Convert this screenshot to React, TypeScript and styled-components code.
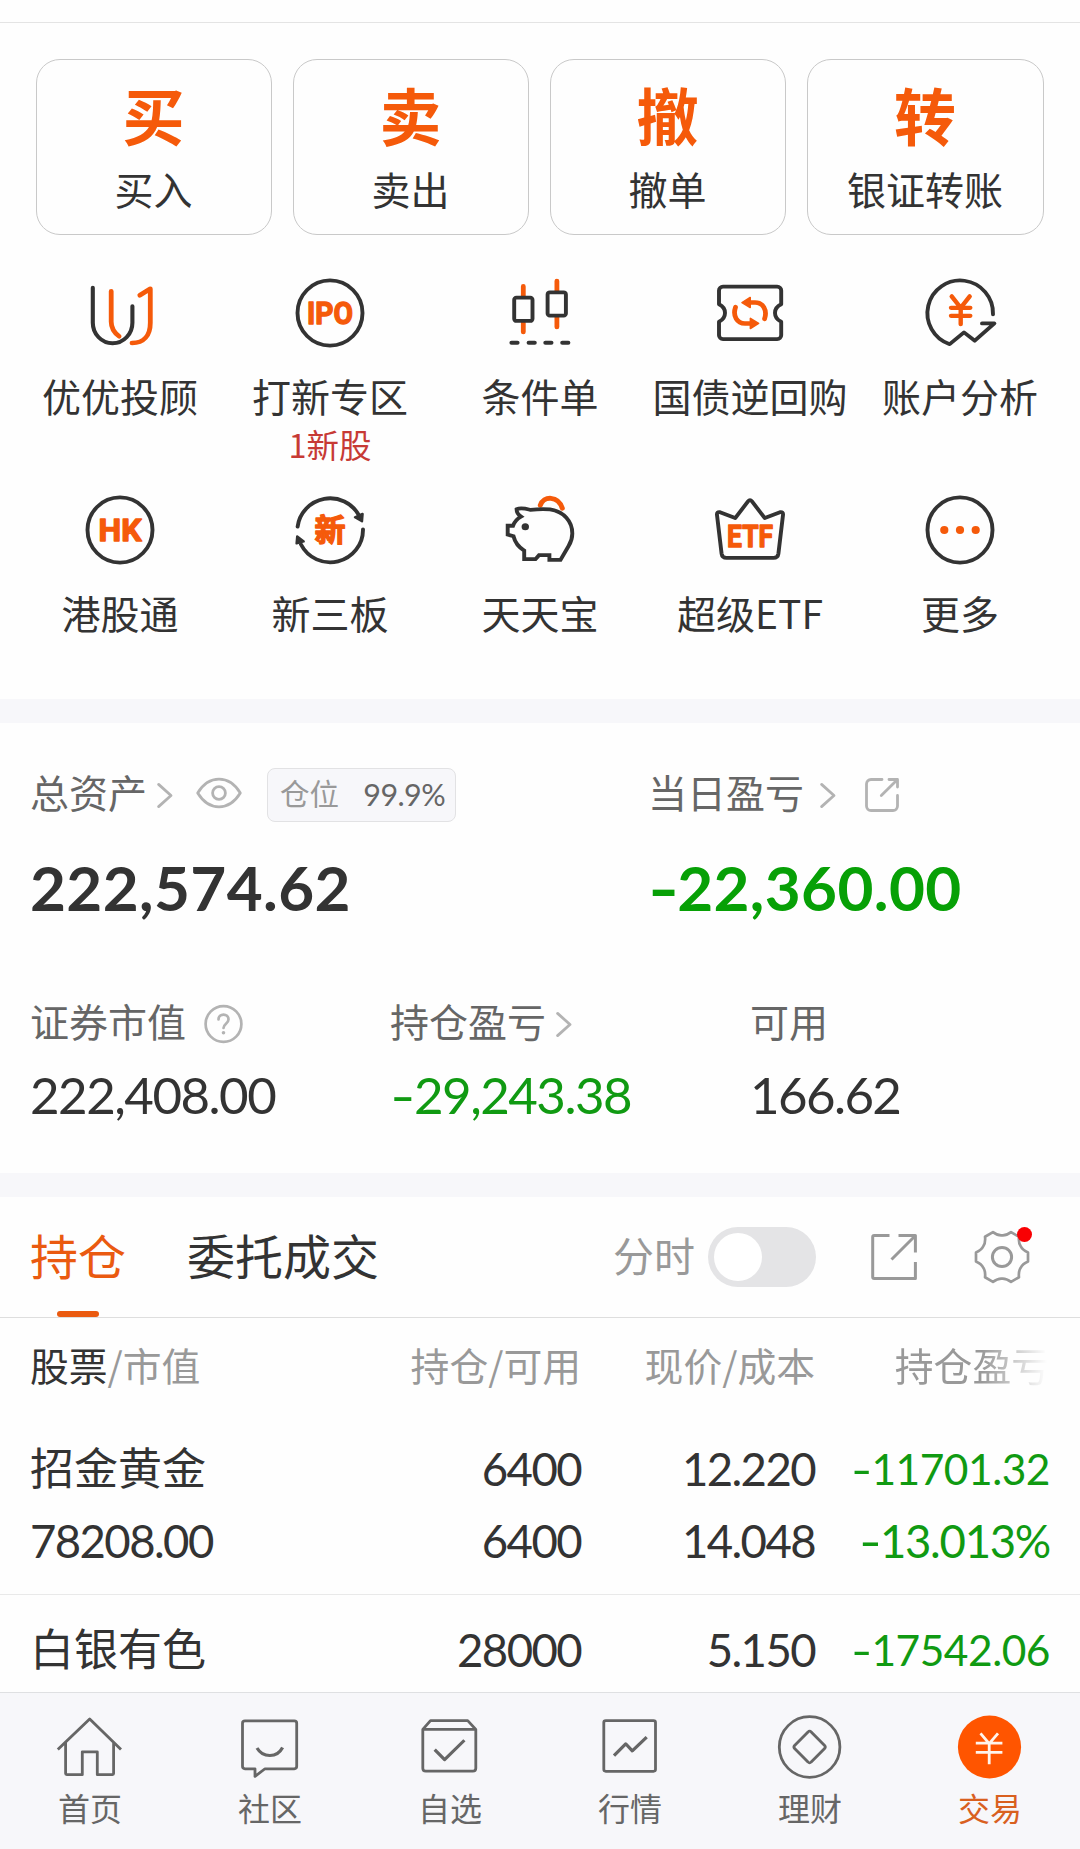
import React from "react";
import styled, { createGlobalStyle } from "styled-components";

const INK = "#333333";
const MUTED = "#666666";
const FAINT = "#999999";
const PALE = "#b3b3b3";
const ORANGE = "#f55a0a";
const GREEN = "#109a12";
const PANEL = "#f7f7fa";

const CJK = `"Noto Sans CJK SC", "Noto Sans", sans-serif`;
const DIGITS = `Lato, "Noto Sans CJK SC", sans-serif`;

const GlobalStyle = createGlobalStyle`
  * { box-sizing: border-box; }
  body { margin: 0; background: #fff; font-family: ${CJK}; color: ${INK}; }
  svg { display: block; flex: none; overflow: visible; }
`;

const Screen = styled.div`
  width: 1080px;
  height: 1849px;
  display: flex;
  flex-direction: column;
  background: #fefefe;
  overflow: hidden;
`;

const Content = styled.main`
  flex: 1;
  min-height: 0;
  overflow: hidden;
`;

const TopEdge = styled.div`
  height: 23px;
  border-bottom: 1px solid #e4e4e4;
`;

const Band = styled.div`
  height: 24px;
  background: ${PANEL};
`;

/* ---------- primary actions ---------- */

const Actions = styled.section`
  display: grid;
  grid-template-columns: repeat(3, 236px) 1fr;
  gap: 21px;
  padding: 36px 36px 0;
`;

const ActionCard = styled.div`
  height: 176px;
  padding: 23px 1px 0 0;
  display: flex;
  flex-direction: column;
  align-items: center;
  gap: 21px;
  border: 1px solid #c9c9c9;
  border-radius: 24px;
`;

const ActionGlyph = styled.span`
  font-size: 62px;
  line-height: 62px;
  font-weight: 700;
  color: ${ORANGE};
`;

const Label = styled.span`
  font-size: 39px;
  line-height: 44px;
  white-space: nowrap;
  color: ${INK};
`;

/* ---------- shortcuts ---------- */

const Shortcuts = styled.section`
  height: 464px;
  padding: 42px 15px 0;
  display: grid;
  grid-template-columns: repeat(5, 210px);
  grid-template-rows: 217px 200px;
`;

const Shortcut = styled.div`
  display: flex;
  flex-direction: column;
  align-items: center;
`;

const ShortcutLabel = styled(Label)`
  margin-top: 24px;
`;

const ShortcutNote = styled.span`
  margin-top: 9px;
  font-size: 32.5px;
  line-height: 36px;
  color: #c73a35;
`;

/* ---------- assets ---------- */

const Assets = styled.section`
  height: 450px;
  padding: 45px 30px 0;
`;

const AssetRow = styled.div<{ $cols: string; $top?: number }>`
  display: grid;
  grid-template-columns: ${(p) => p.$cols};
  margin-top: ${(p) => p.$top ?? 0}px;
`;

const Caption = styled.div`
  height: 54px;
  display: flex;
  align-items: center;
`;

const CaptionText = styled(Label)`
  color: ${MUTED};
  padding-bottom: 9px;
`;

const Gap = styled.span<{ $w: number }>`
  flex: none;
  width: ${(p) => p.$w}px;
`;

const Chip = styled.div`
  width: 189px;
  height: 54px;
  padding: 0 10px 2px 12px;
  display: flex;
  align-items: center;
  justify-content: space-between;
  background: ${PANEL};
  border: 1px solid #e2e2e4;
  border-radius: 8px;
`;

const ChipName = styled.span`
  font-size: 29.5px;
  line-height: 36px;
  padding-bottom: 5px;
  color: ${FAINT};
`;

const NumText = styled.span<{ $size: number; $track: number; $lh: number; $color?: string; $bold?: boolean }>`
  font-family: ${DIGITS};
  font-size: ${(p) => p.$size}px;
  line-height: ${(p) => p.$lh}px;
  letter-spacing: ${(p) => p.$track}px;
  font-weight: ${(p) => (p.$bold ? 700 : 400)};
  color: ${(p) => p.$color ?? INK};
  white-space: nowrap;
`;

const Minus = styled.span`
  display: inline-block;
  width: 0.47em;
  letter-spacing: 0;
  transform: scaleX(1.35);
  transform-origin: 0 50%;
`;

/* ---------- holdings ---------- */

const Tabs = styled.div`
  height: 121px;
  padding: 0 51px 0 30px;
  display: flex;
  align-items: center;
  border-bottom: 1px solid #dedede;
`;

const Tab = styled.div<{ $active?: boolean }>`
  position: relative;
  height: 120px;
  margin-right: 61px;
  padding-bottom: 7px;
  display: flex;
  align-items: center;
  font-size: 48px;
  line-height: 54px;
  color: ${(p) => (p.$active ? "#ea5a10" : INK)};
  &::after {
    content: "";
    display: ${(p) => (p.$active ? "block" : "none")};
    position: absolute;
    left: 27px;
    bottom: 0;
    width: 42px;
    height: 6px;
    border-radius: 3px;
    background: #ea5a10;
  }
`;

const TabTools = styled.div`
  margin-left: auto;
  display: flex;
  align-items: center;
`;

const ToolText = styled.span`
  font-size: 41px;
  line-height: 46px;
  padding-bottom: 6px;
  color: ${FAINT};
`;

const Switch = styled.div`
  width: 108px;
  height: 60px;
  margin: 0 55px 0 13px;
  padding: 6px;
  border-radius: 30px;
  background: #e4e4e6;
`;

const Knob = styled.div`
  width: 48px;
  height: 48px;
  border-radius: 50%;
  background: #fff;
`;

const GearWrap = styled.div`
  position: relative;
  margin-left: 58px;
`;

const RedDot = styled.i`
  position: absolute;
  top: -3px;
  right: -3px;
  width: 15px;
  height: 15px;
  border-radius: 50%;
  background: #f90003;
`;

const TableRow = styled.div`
  height: 181px;
  padding: 29px 30px 0;
  display: grid;
  grid-template-columns: 316px 235px 234px 235px;
  grid-template-rows: 72px 72px;
  border-bottom: 1px solid #e9e9e9;
`;

const TableHead = styled(TableRow)`
  height: 96px;
  padding-top: 24px;
  grid-template-rows: 44px;
  border-bottom: 0;
`;

const Cell = styled.div<{ $left?: boolean }>`
  display: flex;
  justify-content: ${(p) => (p.$left ? "flex-start" : "flex-end")};
  align-items: flex-start;
`;

const HeadText = styled.span<{ $color?: string }>`
  font-size: 38.8px;
  line-height: 44px;
  white-space: nowrap;
  color: ${(p) => p.$color ?? FAINT};
`;

const FadedHead = styled(HeadText)`
  mask-image: linear-gradient(to right, #000 56%, transparent 98%);
`;

const StockName = styled.span`
  font-size: 44px;
  line-height: 47px;
  white-space: nowrap;
`;

/* ---------- bottom navigation ---------- */

const Nav = styled.nav`
  flex: none;
  height: 157px;
  display: grid;
  grid-template-columns: repeat(6, 1fr);
  background: ${PANEL};
  border-top: 1px solid #dfe0e2;
`;

const NavItem = styled.div<{ $active?: boolean }>`
  padding-top: 21px;
  display: flex;
  flex-direction: column;
  align-items: center;
  gap: 9px;
  font-size: 32px;
  line-height: 36px;
  color: ${(p) => (p.$active ? "#d9601f" : MUTED)};
`;

/* ---------- icons ---------- */

type Kids = { children: React.ReactNode };

const ShortcutIcon = ({ children }: Kids) => (
  <svg width="72" height="72" viewBox="-36 -36 72 72" fill="none" stroke={INK} strokeWidth="3.9" strokeLinecap="round" strokeLinejoin="round">
    <g transform="scale(1 .968)">{children}</g>
  </svg>
);

const Ring = () => <ellipse rx="32.5" ry="33.6" />;

const IconText = ({ y, w, size = 32, children }: Kids & { y: number; w: number; size?: number }) => (
  <text
    x={-w / 2}
    y={y}
    textLength={w}
    lengthAdjust="spacingAndGlyphs"
    fontSize={size}
    fontWeight="700"
    fontFamily={`Roboto, ${CJK}`}
    fill={ORANGE}
    stroke={ORANGE}
    strokeWidth="1.4"
  >
    {children}
  </text>
);

const Advisor = () => (
  <ShortcutIcon>
    <path d="M-27.2-26V10a19.8 21.3 0 0 0 39.6 0V-7" strokeWidth="4.1" />
    <path d="M-8.8-22.5V9Q-8.8 18-.9 24M12 31C24 31 30.3 23 30.3 10V-25L19.8-18.3" stroke={ORANGE} strokeWidth="4.8" />
  </ShortcutIcon>
);

const Ipo = () => (
  <ShortcutIcon>
    <Ring />
    <IconText y={11.4} w={46}>IPO</IconText>
  </ShortcutIcon>
);

const Condition = () => (
  <ShortcutIcon>
    <path d="M-16.7-27.5v10M-16.7 10v9.5M16.9-33v10M16.9 4.5v10" stroke={ORANGE} strokeWidth="4.8" />
    <rect x="-25.8" y="-15.8" width="18.3" height="24" rx="2.2" />
    <rect x="7.6" y="-21.4" width="18.3" height="24" rx="2.2" />
    <path d="M-28.5 30.7h6M-11.3 30.7h6M5.4 30.7h6M22.3 30.7h6" strokeWidth="4.2" />
  </ShortcutIcon>
);

const Repo = () => (
  <ShortcutIcon>
    <path d="M-27-27.2H27.2a4 4 0 0 1 4 4V-9Q25-6 25 0t6.2 9V22.9a4 4 0 0 1-4 4H-27a4 4 0 0 1-4-4V9Q-25 6-25 0t-6-9V-23.2a4 4 0 0 1 4-4Z" />
    <path d="M-1-10.8H5C13-10.8 17.5-3 14.6 6M-14.5-6C-17.5 3-13 10.8-5 10.8H0" stroke={ORANGE} strokeWidth="4.8" />
    <path d="M-8-10.8L.2-16V-5.6ZM8.6 10.8L.4 5.6V16Z" fill={ORANGE} stroke={ORANGE} strokeWidth="1.6" />
  </ShortcutIcon>
);

const Analysis = () => (
  <ShortcutIcon>
    <path d="M33 1.4A32.8 33.8 0 1 0-10.3 32.2L4 20 14.8 28.6 34.4 10.8H22" />
    <path d="M-8.3-17.2.7-5.5 9.7-17.2M-9-5.3H10.3M-9 2.9H10.3M.7-5V11.5" stroke={ORANGE} strokeWidth="4.4" />
  </ShortcutIcon>
);

const HongKong = () => (
  <ShortcutIcon>
    <Ring />
    <IconText y={11.6} w={43}>HK</IconText>
  </ShortcutIcon>
);

const NewBoard = () => (
  <ShortcutIcon>
    <path d="M-32.4-3.4A32.8 33.8 0 0 1 29-15M33-.7A32.8 33.8 0 0 1-29 15" />
    <path d="M25-13.2 32.6-16.6 32-9ZM-32.8 6.6-26.3 11.8-33.4 13.8Z" fill={INK} strokeWidth="2.4" />
    <IconText y={11.7} w={31}>新</IconText>
  </ShortcutIcon>
);

const Piggy = () => (
  <ShortcutIcon>
    <path d="M.3-25.5C3.500-35.500 18-35.800 22.300-22.500" stroke={ORANGE} strokeWidth="5" />
    <path d="M-23.4-21.5C-19-23.5-14-22-9.6-20.8C-3-21.5 4-21.8 10-21.2C24-19 32.3-9 32.3 3.5C32.3 9 31 12.5 28.6 16.5L20.5 30.8H9.4V26H-1L-4.5 30.2H-15.8V21.3C-21 18-25 13-26.5 6.5L-32.3 4.8V-4.4H-27C-25.5-8.5-23-11.5-19-13.8C-22-16-23.4-18-23.4-21.5Z" strokeLinejoin="miter" />
    <circle cx="-14.7" cy="-3.4" r="3.7" fill={INK} stroke="none" />
  </ShortcutIcon>
);

const Crown = () => (
  <ShortcutIcon>
    <path d="M-30-18.4-14.8-12.3-2-29.5Q0-32 2-29.5L14.8-12.3 30-18.4Q33.4-19 33-15.5L28.4 24.5Q27.8 28.8 23.5 28.8H-23.5Q-27.8 28.8-28.4 24.5L-33-15.5Q-33.4-19-30-18.4Z" />
    <IconText y={17.7} w={46}>ETF</IconText>
  </ShortcutIcon>
);

const More = () => (
  <ShortcutIcon>
    <Ring />
    {[-15.7, 0, 15.7].map((x) => (
      <circle key={x} cx={x} cy="0" r="4.1" fill={ORANGE} stroke="none" />
    ))}
  </ShortcutIcon>
);

const Chevron = () => (
  <svg width="16" height="25" viewBox="0 0 16 25" fill="none" stroke={PALE} strokeWidth="2.8" strokeLinecap="round" strokeLinejoin="round">
    <path d="M1.6 1.4 14 12.5 1.6 23.6" />
  </svg>
);

const EyeSvg = styled.svg`
  margin-bottom: 4px;
`;

const Eye = () => (
  <EyeSvg width="46" height="30" viewBox="-23 -15 46 30" fill="none" stroke={PALE} strokeWidth="2.8" strokeLinejoin="round">
    <path d="M-21.3 0C-10-18.4 10-18.4 21.3 0C10 18.4-10 18.4-21.3 0Z" />
    <circle r="6.4" />
  </EyeSvg>
);

const Help = () => (
  <svg width="39" height="38" viewBox="-19.5 -19 39 38" fill="none" stroke={PALE} strokeWidth="2.7" strokeLinecap="round">
    <circle r="17.9" />
    <path d="M-5-4.5C-5-11 5-11 5-4.5C5-.5 0 0 0 4" />
    <circle cy="8.8" r="1.8" fill={PALE} stroke="none" />
  </svg>
);

const ShareSmall = () => (
  <svg width="34" height="34" viewBox="0 0 34 34" fill="none" stroke={PALE} strokeWidth="2.8" strokeLinecap="round" strokeLinejoin="round">
    <path d="M17 1.5H6A4.5 4.5 0 0 0 1.5 6V28A4.5 4.5 0 0 0 6 32.5H28A4.5 4.5 0 0 0 32.5 28V17.5M24 1.5H32.5V9M16.3 17.5 32 2" />
  </svg>
);

const ShareLarge = () => (
  <svg width="46" height="46" viewBox="0 0 46 46" fill="none" stroke={FAINT} strokeWidth="3" strokeLinejoin="round">
    <path d="M18.5 1.6H3.2Q1.7 1.6 1.7 3.1V42.9Q1.7 44.4 3.2 44.4H44.4V28M27.5 1.6H44.4V18.6M20.5 25.5 44 2" />
  </svg>
);

const gearPath = (() => {
  const point = (deg: number, r: number) => {
    const a = (deg * Math.PI) / 180;
    return `${(r * Math.cos(a)).toFixed(2)} ${(r * Math.sin(a)).toFixed(2)}`;
  };
  let d = `M${point(-10, 26.4)}`;
  for (let k = 0; k < 6; k++) {
    const a = k * 60;
    d += `L${point(a + 10, 26.4)}Q${point(a + 19, 21.6)} ${point(a + 30, 21.6)}Q${point(a + 41, 21.6)} ${point(a + 50, 26.4)}`;
  }
  return d + "Z";
})();

const Gear = () => (
  <svg width="54" height="54" viewBox="-27 -27 54 54" fill="none" stroke={FAINT} strokeWidth="2.7" strokeLinejoin="round">
    <path d={gearPath} />
    <circle r="9.6" strokeWidth="3" />
  </svg>
);

const NavIcon = ({ children }: Kids) => (
  <svg width="66" height="66" viewBox="-33 -33 66 66" fill="none" stroke={MUTED} strokeWidth="2.8" strokeLinejoin="round">
    <g transform="scale(1 .968)">{children}</g>
  </svg>
);

const navItems = [
  {
    label: "首页",
    icon: <path d="M-32.2 2.6-.3-29 31 2.6M-24.4-4.6V27.5Q-24.4 28.6-23.3 28.6H-7.7V5H7.3V28.6H22.5Q23.6 28.6 23.6 27.5V-4.6" />,
  },
  {
    label: "社区",
    icon: (
      <>
        <path d="M-25-26.9H24.3Q26.7-26.9 26.7-24.5V20Q26.7 22.5 24.3 22.5H-5L-15 30.4V22.5H-25Q-27.5 22.5-27.5 20V-24.5Q-27.5-26.9-25-26.9Z" />
        <path d="M-13 1C-7 11.5 7 11.5 12.6.5" strokeWidth="3.2" />
      </>
    ),
  },
  {
    label: "自选",
    icon: (
      <>
        <path d="M-27.2-18.3-19.5-27.3H17.7L25.8-18.3V22Q25.8 25 22.8 25H-24.2Q-27.2 25-27.2 22ZM-27.2-18.3H25.8" />
        <path d="M-15.3 2.7-5.4 13 14.4-7" strokeWidth="3.2" />
      </>
    ),
  },
  {
    label: "行情",
    icon: (
      <>
        <rect x="-26.2" y="-27.2" width="51.7" height="52.3" rx="2" />
        <path d="M-16 8.9-4.3-3.3 2.3 4 16.7-10.3" strokeWidth="3.2" />
      </>
    ),
  },
  {
    label: "理财",
    icon: (
      <>
        <ellipse cx="-.4" rx="30.3" ry="31.3" />
        <path d="M-2-15.5Q-.4-17.5 1.2-15.5L14.6-1.6Q16 0 14.6 1.6L1.2 15.5Q-.4 17.5-2 15.5L-15.4 1.6Q-16.8 0-15.4-1.6Z" />
      </>
    ),
  },
  {
    label: "交易",
    active: true,
    icon: (
      <>
        <ellipse cx="-.5" rx="31.6" ry="32.5" fill="#ff5500" stroke="none" />
        <path d="M-9.5-14-.8-3.6 8-14M-14.2-4H12.4M-14.2 5.5H12.4M-.8-4V17.8" stroke="#fff4ec" strokeWidth="2.8" />
      </>
    ),
  },
];

const actions = [
  ["买", "买入"],
  ["卖", "卖出"],
  ["撤", "撤单"],
  ["转", "银证转账"],
];

const shortcuts: { icon: React.ReactNode; label: string; note?: string }[] = [
  { icon: <Advisor />, label: "优优投顾" },
  { icon: <Ipo />, label: "打新专区", note: "1新股" },
  { icon: <Condition />, label: "条件单" },
  { icon: <Repo />, label: "国债逆回购" },
  { icon: <Analysis />, label: "账户分析" },
  { icon: <HongKong />, label: "港股通" },
  { icon: <NewBoard />, label: "新三板" },
  { icon: <Piggy />, label: "天天宝" },
  { icon: <Crown />, label: "超级ETF" },
  { icon: <More />, label: "更多" },
];

type Holding = { name: string; qty: string; price: string; pl: string; rest?: [string, string, string, string] };

const holdings: Holding[] = [
  { name: "招金黄金", qty: "6400", price: "12.220", pl: "-11701.32", rest: ["78208.00", "6400", "14.048", "-13.013%"] },
  { name: "白银有色", qty: "28000", price: "5.150", pl: "-17542.06" },
];

type NumProps = { value: string; size: number; track: number; lh: number; color?: string; bold?: boolean };

const Num = ({ value, size, track, lh, color, bold }: NumProps) => {
  const negative = value.startsWith("-");
  return (
    <NumText $size={size} $track={track} $lh={lh} $color={color} $bold={bold}>
      {negative && <Minus>-</Minus>}
      {negative ? value.slice(1) : value}
    </NumText>
  );
};

const RowNum = ({ value, color, track = -1.6 }: { value: string; color?: string; track?: number }) => (
  <Num value={value} size={45.5} track={track} lh={52} color={color} />
);

export default function App() {
  return (
    <Screen>
      <GlobalStyle />
      <Content>
        <TopEdge />
        <Actions>
          {actions.map(([glyph, label]) => (
            <ActionCard key={label}>
              <ActionGlyph>{glyph}</ActionGlyph>
              <Label>{label}</Label>
            </ActionCard>
          ))}
        </Actions>
        <Shortcuts>
          {shortcuts.map((s) => (
            <Shortcut key={s.label}>
              {s.icon}
              <ShortcutLabel>{s.label}</ShortcutLabel>
              {s.note && <ShortcutNote>{s.note}</ShortcutNote>}
            </Shortcut>
          ))}
        </Shortcuts>
        <Band />
        <Assets>
          <AssetRow $cols="618px 1fr">
            <Caption>
              <CaptionText>总资产</CaptionText>
              <Gap $w={10} />
              <Chevron />
              <Gap $w={23} />
              <Eye />
              <Gap $w={25} />
              <Chip>
                <ChipName>仓位</ChipName>
                <Num value="99.9%" size={30.5} track={-0.6} lh={36} color={MUTED} />
              </Chip>
            </Caption>
            <Caption>
              <CaptionText>当日盈亏</CaptionText>
              <Gap $w={16} />
              <Chevron />
              <Gap $w={29} />
              <ShareSmall />
            </Caption>
          </AssetRow>
          <AssetRow $cols="618px 1fr" $top={32}>
            <Num value="222,574.62" size={62} track={0.4} lh={66} bold />
            <Num value="-22,360.00" size={62} track={0.4} lh={66} color="#07a006" bold />
          </AssetRow>
          <AssetRow $cols="360px 360px 1fr" $top={77}>
            <Caption>
              <CaptionText>证券市值</CaptionText>
              <Gap $w={18} />
              <Help />
            </Caption>
            <Caption>
              <CaptionText>持仓盈亏</CaptionText>
              <Gap $w={10} />
              <Chevron />
            </Caption>
            <Caption>
              <CaptionText>可用</CaptionText>
            </Caption>
          </AssetRow>
          <AssetRow $cols="360px 360px 1fr" $top={17}>
            <Num value="222,408.00" size={51} track={-1.5} lh={54} />
            <Num value="-29,243.38" size={51} track={-1.5} lh={54} color={GREEN} />
            <Num value="166.62" size={51} track={-1.6} lh={54} />
          </AssetRow>
        </Assets>
        <Band />
        <Tabs>
          <Tab $active>持仓</Tab>
          <Tab>委托成交</Tab>
          <TabTools>
            <ToolText>分时</ToolText>
            <Switch>
              <Knob />
            </Switch>
            <ShareLarge />
            <GearWrap>
              <Gear />
              <RedDot />
            </GearWrap>
          </TabTools>
        </Tabs>
        <TableHead>
          <Cell $left>
            <HeadText $color={INK}>股票</HeadText>
            <HeadText>/市值</HeadText>
          </Cell>
          <Cell><HeadText>持仓/可用</HeadText></Cell>
          <Cell><HeadText>现价/成本</HeadText></Cell>
          <Cell><FadedHead>持仓盈亏</FadedHead></Cell>
        </TableHead>
        {holdings.map((h) => (
          <TableRow key={h.name}>
            <Cell $left><StockName>{h.name}</StockName></Cell>
            <Cell><RowNum value={h.qty} /></Cell>
            <Cell><RowNum value={h.price} /></Cell>
            <Cell><Num value={h.pl} size={42.5} track={-0.5} lh={52} color={GREEN} /></Cell>
            {h.rest && (
              <>
                <Cell $left><RowNum value={h.rest[0]} /></Cell>
                <Cell><RowNum value={h.rest[1]} /></Cell>
                <Cell><RowNum value={h.rest[2]} /></Cell>
                <Cell><RowNum value={h.rest[3]} color={GREEN} track={-1.3} /></Cell>
              </>
            )}
          </TableRow>
        ))}
      </Content>
      <Nav>
        {navItems.map((n) => (
          <NavItem key={n.label} $active={n.active}>
            <NavIcon>{n.icon}</NavIcon>
            {n.label}
          </NavItem>
        ))}
      </Nav>
    </Screen>
  );
}
